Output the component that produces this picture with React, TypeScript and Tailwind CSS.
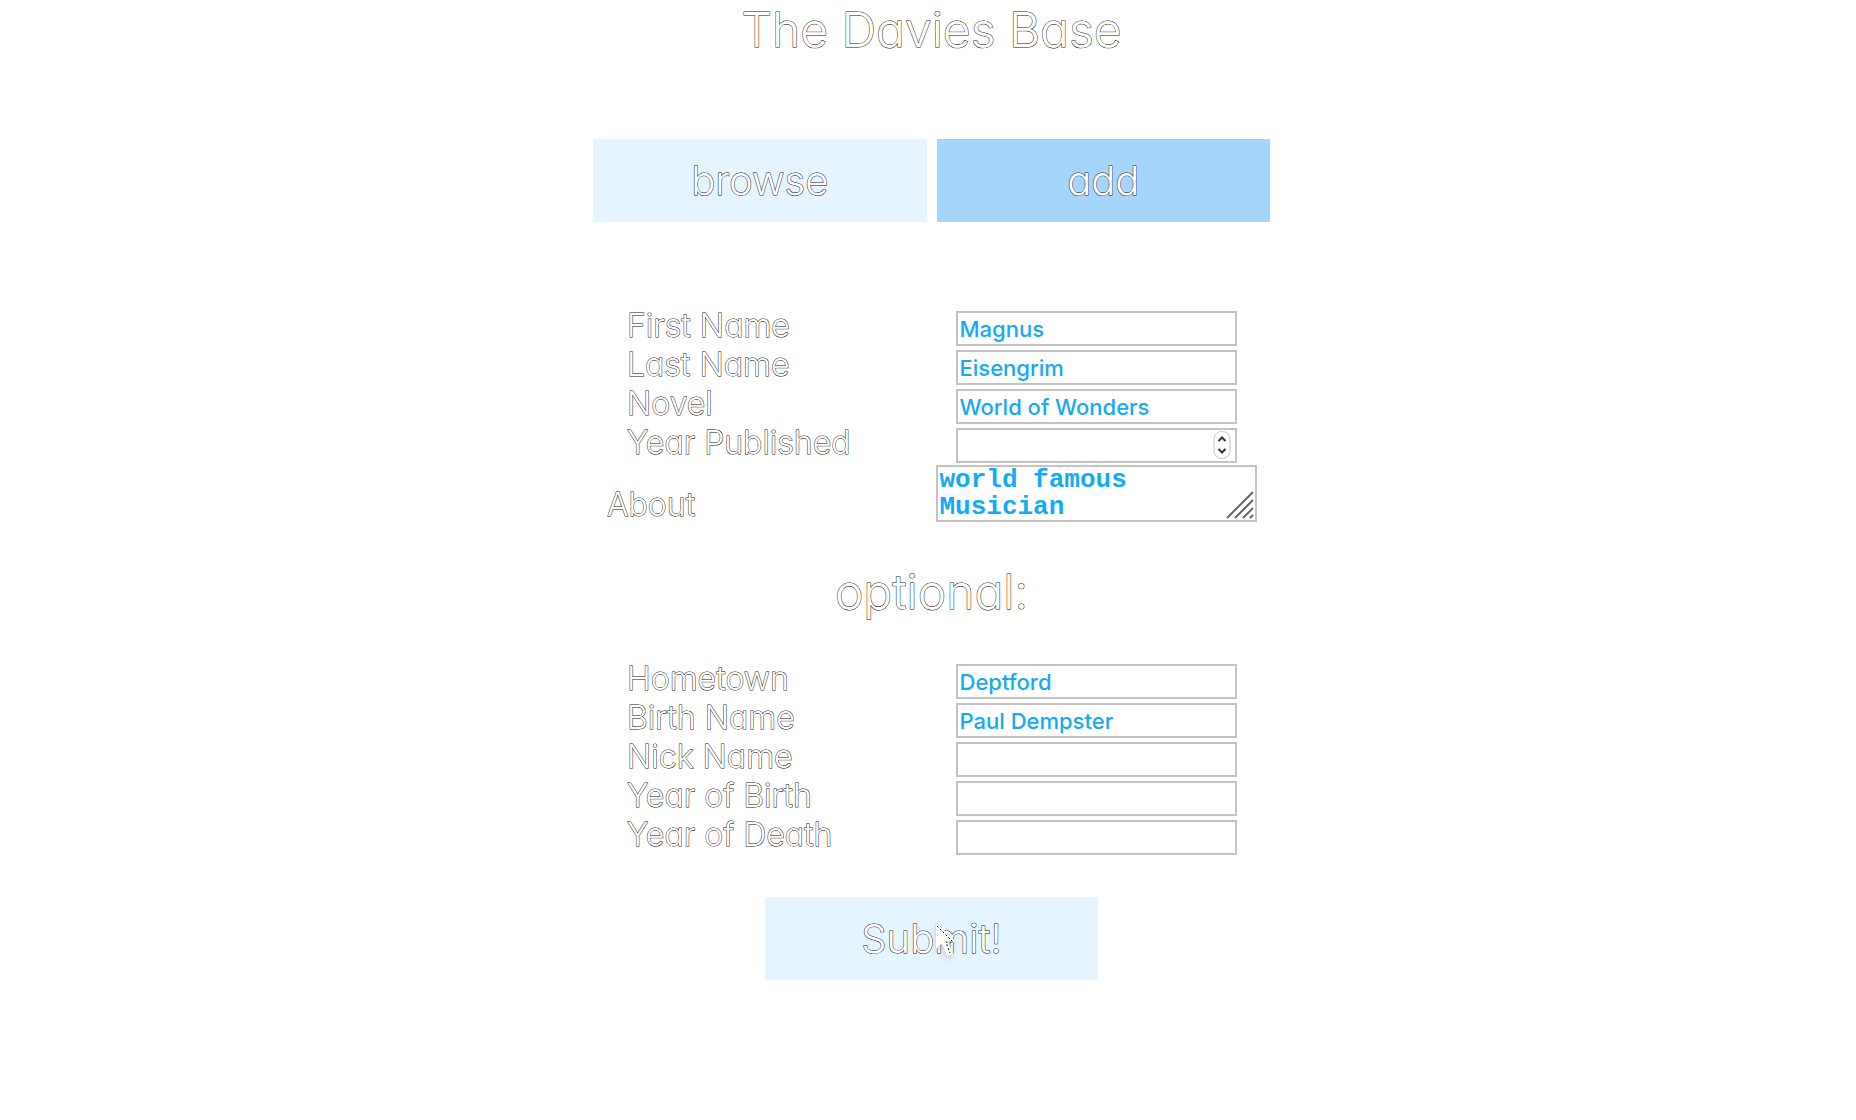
import React from "react";

const outline =
  "font-['Inter',sans-serif] font-light text-white [paint-order:stroke] [-webkit-text-stroke:1px_#202020] [font-feature-settings:'cv11']";
const box =
  "block border-2 border-[#c3c3c3] bg-white text-[#14aaf5] outline-none";

function TextRow({
  id,
  label,
  value = "",
  type = "text",
}: {
  id: string;
  label: string;
  value?: string;
  type?: string;
}) {
  return (
    <div className="grid grid-cols-2 gap-x-2">
      <label htmlFor={id} className={`${outline} pl-[34px] text-[32px] leading-[30px]`}>
        {label}
      </label>
      <div className="relative ml-5 w-[281px]">
        <input
          id={id}
          type={type}
          defaultValue={value}
          className={`${box} h-[35px] w-full px-[2px] font-['Inter',sans-serif] text-[22px] font-medium [appearance:textfield]`}
        />
        {type === "number" && (
          <svg
            viewBox="0 0 18 30"
            className="pointer-events-none absolute right-[6px] top-[2px] h-[30px] w-[18px]"
            fill="none"
            aria-hidden="true"
          >
            <rect x="1" y="1.5" width="16" height="27" rx="7.5" fill="#fff" stroke="#c4c4c4" />
            <path d="M5.5 11 9 7.500l3.500 3.500M5.500 19 9 22.500l3.500-3.500" stroke="#333" strokeWidth="2" />
          </svg>
        )}
      </div>
    </div>
  );
}

export default function App() {
  return (
    <main className="min-h-screen bg-white pl-[7px]">
      <div className="mx-auto flex max-w-[677px] flex-col">
        <h1 className={`${outline} text-center text-[48px] leading-[60px]`}>The Davies Base</h1>

        <nav className="mt-[79px] grid grid-cols-2 gap-[10px]">
          <button type="button" className={`${outline} h-[83px] bg-[#e6f4ff] text-[40px]`}>
            browse
          </button>
          <button
            type="button"
            className={`${outline} h-[83px] bg-[#a6d5fa] text-[40px] [-webkit-text-stroke-color:#000000]`}
          >
            add
          </button>
        </nav>

        <form className="mt-[89px] flex flex-col" onSubmit={(e) => e.preventDefault()}>
          <div className="flex flex-col gap-1">
            <TextRow id="first" label="First Name" value="Magnus" />
            <TextRow id="last" label="Last Name" value="Eisengrim" />
            <TextRow id="novel" label="Novel" value="World of Wonders" />
            <TextRow id="published" label="Year Published" type="number" />
          </div>
          <div className="mt-[2px] grid grid-cols-2 items-end gap-x-2">
            <label htmlFor="about" className={`${outline} pb-[2px] pl-[14px] text-[32px] leading-[30px]`}>
              About
            </label>
            <div className="relative w-[321px]">
              <textarea
                id="about"
                defaultValue={"world famous\nMusician"}
                className={`${box} h-[57px] w-full resize-none overflow-hidden px-[2px] font-['Courier_New','Liberation_Mono',monospace] text-[26px] font-bold leading-[27px]`}
              />
              <svg
                viewBox="0 0 28 28"
                className="pointer-events-none absolute bottom-[3px] right-[3px] size-7"
                stroke="#666"
                strokeWidth="2"
                aria-hidden="true"
              >
                <path d="M1 27 27 1M9 27 27 9M17 27 27 17M24 27l3-3" />
              </svg>
            </div>
          </div>

          <h2 className={`${outline} mt-10 text-center text-[48px] leading-[60px]`}>optional:</h2>

          <div className="mt-[42px] flex flex-col gap-1">
            <TextRow id="hometown" label="Hometown" value="Deptford" />
            <TextRow id="birthname" label="Birth Name" value="Paul Dempster" />
            <TextRow id="nickname" label="Nick Name" />
            <TextRow id="birth" label="Year of Birth" />
            <TextRow id="death" label="Year of Death" />
          </div>

          <button
            type="submit"
            className={`${outline} relative mt-[42px] h-[83px] w-[333px] self-center bg-[#e6f4ff] text-[40px]`}
          >
            Submit!
            <svg
              viewBox="0 0 24 38"
              className="absolute left-[169px] top-[25px] h-[38px] w-6 drop-shadow-md"
              aria-hidden="true"
            >
              <path d="M2 1v26l6-6 5 13 6-2-5-12h8z" fill="#fff" stroke="#d0d0d0" strokeWidth="1" />
              <path d="m3 4 16 16h-7l4 11" fill="none" stroke="#111" strokeWidth="1" strokeDasharray="2 2" />
            </svg>
          </button>
        </form>
      </div>
    </main>
  );
}
